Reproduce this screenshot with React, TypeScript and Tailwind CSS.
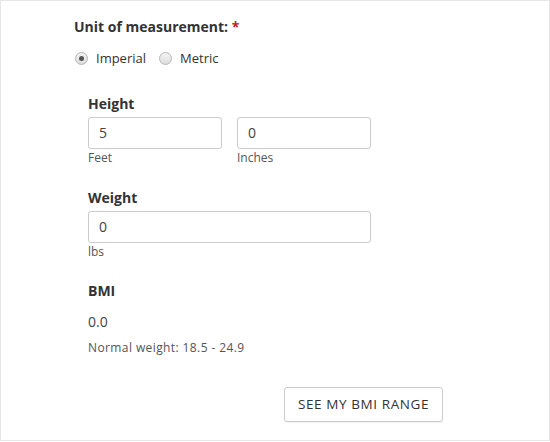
import React from 'react';

const Radio = ({ checked, label }: { checked?: boolean; label: string }) => (
  <label className="flex items-center">
    <span className="flex h-[13px] w-[13px] items-center justify-center rounded-full border border-[#b5b5b5] bg-gradient-to-b from-[#f4f4f4] to-[#dcdcdc]">
      {checked && <span className="h-[5px] w-[5px] rounded-full bg-[#555]" />}
    </span>
    <span className="ml-[8px] text-[13px] text-[#333]">{label}</span>
  </label>
);

const Field = ({ value, hint, className }: { value: string; hint: string; className: string }) => (
  <div className={className}>
    <div className="flex h-[32px] items-center rounded-[3px] border border-[#ccc] bg-white px-[10px] text-[14px] text-[#444]">
      {value}
    </div>
    <div className="mt-[1px] text-[12px] leading-[16px] text-[#555]">{hint}</div>
  </div>
);

export default function App() {
  return (
    <div
      className="h-[441px] w-[550px] border border-[#e6e6e6] bg-white text-[#333]"
      style={{ fontFamily: '"Open Sans", "DejaVu Sans", sans-serif' }}
    >
      <div className="pl-[73px] pt-[16px]">
        <div className="text-[14px] font-bold leading-[20px] text-[#333]">
          Unit of measurement: <span className="text-[#b22]">*</span>
        </div>
        <div className="mt-[12px] flex items-center gap-[13px] pl-[1px]">
          <Radio checked label="Imperial" />
          <Radio label="Metric" />
        </div>
      </div>

      <div className="pl-[87px]">
        <div className="mt-[25px] text-[14px] font-bold leading-[20px]">Height</div>
        <div className="mt-[3px] flex gap-[15px]">
          <Field value="5" hint="Feet" className="w-[134px]" />
          <Field value="0" hint="Inches" className="w-[134px]" />
        </div>

        <div className="mt-[22px] text-[14px] font-bold leading-[20px]">Weight</div>
        <Field value="0" hint="lbs" className="mt-[3px] w-[283px]" />

        <div className="mt-[21px] text-[14px] font-bold leading-[20px]">BMI</div>
        <div className="mt-[11px] text-[14px] leading-[20px] text-[#444]">0.0</div>
        <div className="mt-[8px] text-[12px] leading-[16px] tracking-[0.4px] text-[#555]">Normal weight: 18.5 - 24.9</div>

        <div className="mt-[31px] flex pl-[196px]">
          <button className="h-[35px] w-[159px] rounded-[3px] border border-[#ccc] bg-white text-[13.5px] tracking-[0.6px] text-[#333] shadow-[0_1px_1px_rgba(0,0,0,0.06)]">
            SEE MY BMI RANGE
          </button>
        </div>
      </div>
    </div>
  );
}
